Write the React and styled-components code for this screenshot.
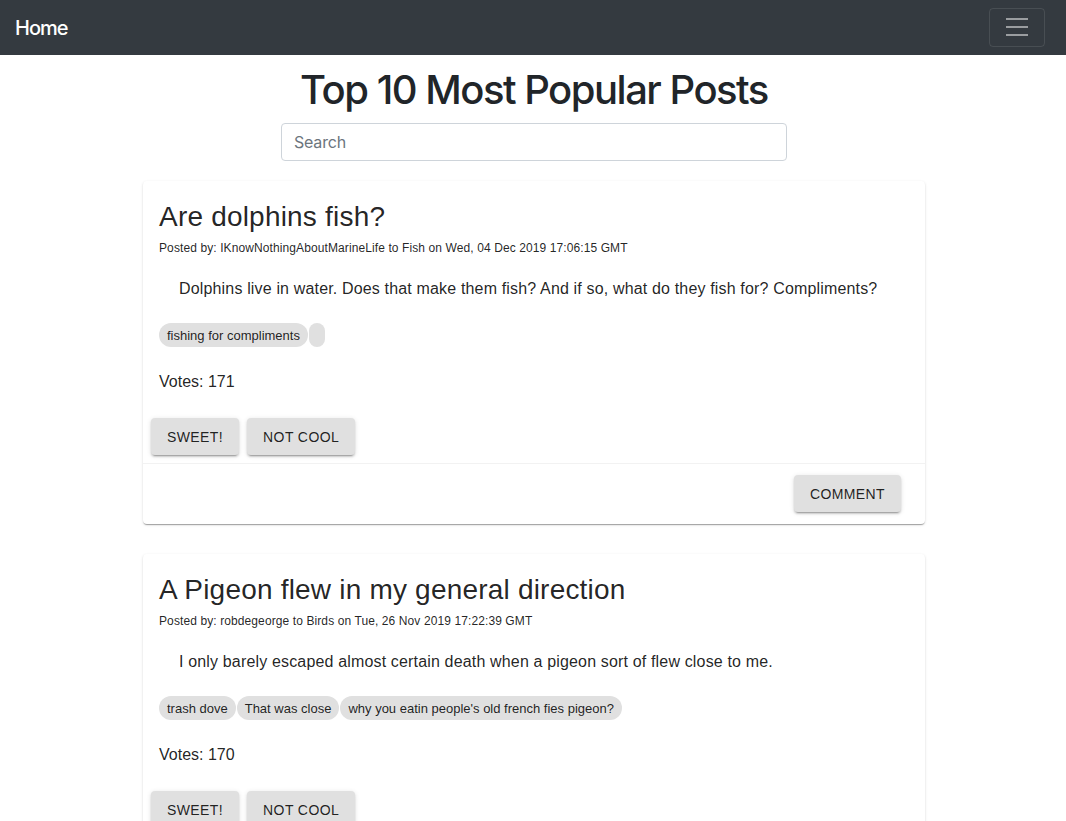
import React from 'react';
import styled, { createGlobalStyle } from 'styled-components';

const posts = [
  {
    id: 1,
    title: 'Are dolphins fish?',
    author: 'IKnowNothingAboutMarineLife',
    topic: 'Fish',
    date: 'Wed, 04 Dec 2019 17:06:15 GMT',
    body: 'Dolphins live in water. Does that make them fish? And if so, what do they fish for? Compliments?',
    tags: ['fishing for compliments', ''],
    votes: 171
  },
  {
    id: 2,
    title: 'A Pigeon flew in my general direction',
    author: 'robdegeorge',
    topic: 'Birds',
    date: 'Tue, 26 Nov 2019 17:22:39 GMT',
    body: 'I only barely escaped almost certain death when a pigeon sort of flew close to me.',
    tags: ['trash dove', 'That was close', "why you eatin people's old french fies pigeon?"],
    votes: 170
  }
];

const GlobalStyle = createGlobalStyle`
  * {
    box-sizing: border-box;
  }

  body {
    margin: 0;
    background: #fff;
    font-family: Inter, "Noto Sans", sans-serif;
    color: #212529;
  }
`;

const Navbar = styled.nav`
  height: 55px;
  background: #343a40;
  display: flex;
  align-items: center;
  justify-content: space-between;
  padding: 0 21px 0 15px;
`;

const Brand = styled.a`
  color: #fff;
  font-size: 20px;
  font-weight: 500;
  letter-spacing: -1px;
  text-decoration: none;
`;

const Toggler = styled.button`
  width: 56px;
  height: 39px;
  margin-top: -1px;
  padding: 0;
  display: flex;
  align-items: center;
  justify-content: center;
  background: transparent;
  border: 1px solid rgba(255, 255, 255, 0.1);
  border-radius: 4px;
`;

const Main = styled.main`
  display: flex;
  flex-direction: column;
  align-items: center;
  padding: 11px 0 40px 2px;
`;

const Title = styled.h1`
  margin: 0 0 9px;
  font-size: 40px;
  line-height: 48px;
  font-weight: 500;
  letter-spacing: -1.5px;
  color: #212529;
`;

const Search = styled.input`
  width: 506px;
  height: 38px;
  padding: 6px 12px;
  font-family: Inter, "Noto Sans", sans-serif;
  font-size: 16px;
  letter-spacing: -0.2px;
  color: #495057;
  border: 1px solid #ced4da;
  border-radius: 4px;
  margin-bottom: 20px;

  &::placeholder {
    color: #6c757d;
  }
`;

const CardList = styled.div`
  display: flex;
  flex-direction: column;
  gap: 30px;
  width: 782px;
`;

const Card = styled.article`
  background: #fff;
  border-radius: 4px;
  overflow: hidden;
  font-family: "Liberation Sans", Arial, sans-serif;
  color: rgba(0, 0, 0, 0.87);
  box-shadow: 0 2px 1px -1px rgba(0, 0, 0, 0.2), 0 1px 1px 0 rgba(0, 0, 0, 0.14),
    0 1px 3px 0 rgba(0, 0, 0, 0.12);
`;

const CardContent = styled.div`
  padding: 17px 16px 16px;
`;

const PostTitle = styled.h2`
  margin: 0;
  font-size: 28px;
  line-height: 38px;
  font-weight: 400;
  letter-spacing: 0.2px;
`;

const Meta = styled.div`
  margin-top: 3px;
  font-size: 12px;
  line-height: 18px;
  letter-spacing: 0.1px;
`;

const Body = styled.p`
  margin: 20px 0 0;
  font-size: 16px;
  line-height: 24px;
  letter-spacing: 0.16px;
  text-indent: 20px;
`;

const Tags = styled.div`
  display: flex;
  flex-wrap: wrap;
  gap: 1px;
  margin-top: 22px;
`;

const Chip = styled.span`
  height: 24px;
  min-width: 16px;
  padding: 0 8px;
  display: inline-flex;
  align-items: center;
  border-radius: 12px;
  background: #e0e0e0;
  font-size: 13px;
  white-space: nowrap;
`;

const Votes = styled.div`
  margin-top: 23px;
  font-size: 16px;
  line-height: 24px;
`;

const Actions = styled.div`
  display: flex;
  align-items: center;
  justify-content: ${(p) => (p.$end ? 'flex-end' : 'flex-start')};
  gap: 8px;
  padding: ${(p) => (p.$end ? '11px 24px 12px 8px' : '8px')};
  border-top: ${(p) => (p.$end ? '1px solid rgba(0, 0, 0, 0.05)' : 'none')};
`;

const Button = styled.button`
  height: 37px;
  padding: 0 16px;
  border: 0;
  border-radius: 4px;
  background: #e0e0e0;
  color: rgba(0, 0, 0, 0.87);
  font-family: "Liberation Sans", Arial, sans-serif;
  font-size: 14px;
  letter-spacing: 0.4px;
  text-transform: uppercase;
  box-shadow: 0 3px 1px -2px rgba(0, 0, 0, 0.2), 0 2px 2px 0 rgba(0, 0, 0, 0.14),
    0 1px 5px 0 rgba(0, 0, 0, 0.12);
  cursor: pointer;
`;

const MenuIcon = () => (
  <svg width='30' height='30' viewBox='0 0 30 30'>
    <path
      d='M4 7h22M4 15h22M4 23h22'
      stroke='rgba(255,255,255,0.5)'
      strokeWidth='2'
      strokeLinecap='butt'
    />
  </svg>
);

const PostCard = ({ post }) => (
  <Card>
    <CardContent>
      <PostTitle>{post.title}</PostTitle>
      <Meta>
        Posted by: {post.author} to {post.topic} on {post.date}
      </Meta>
      <Body>{post.body}</Body>
      <Tags>
        {post.tags.map((tag, i) => (
          <Chip key={i}>{tag}</Chip>
        ))}
      </Tags>
      <Votes>Votes: {post.votes}</Votes>
    </CardContent>
    <Actions>
      <Button>Sweet!</Button>
      <Button>Not cool</Button>
    </Actions>
    <Actions $end>
      <Button>Comment</Button>
    </Actions>
  </Card>
);

const App = () => (
  <>
    <GlobalStyle />
    <Navbar>
      <Brand href='#'>Home</Brand>
      <Toggler aria-label='Toggle navigation'>
        <MenuIcon />
      </Toggler>
    </Navbar>
    <Main>
      <Title>Top 10 Most Popular Posts</Title>
      <Search placeholder='Search' />
      <CardList>
        {posts.map((post) => (
          <PostCard post={post} key={post.id} />
        ))}
      </CardList>
    </Main>
  </>
);

export default App;
